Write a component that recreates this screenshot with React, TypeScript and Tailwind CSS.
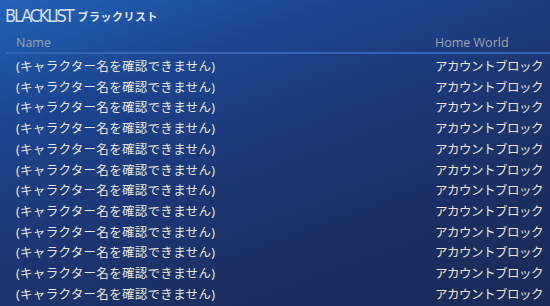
import React from "react";

const rows = Array.from({ length: 12 }, () => ({
  name: "(キャラクター名を確認できません)",
  world: "アカウントブロック",
}));

const jp = { fontFamily: '"Noto Sans", "Noto Sans CJK JP", sans-serif' };

export default function App() {
  return (
    <div
      className="w-[550px] h-[306px] overflow-hidden bg-[linear-gradient(160deg,#2163b8_0%,#1c4590_25%,#1c3775_50%,#1c2e62_75%,#1b2a58_100%)] text-[#e9e5dc]"
      style={jp}
    >
      {/* title bar */}
      <div className="flex items-end gap-[5px] pl-[5px] pt-[6px] h-[25px]">
        <span
          className="text-[18px] leading-[18px] text-[#d8dde6] whitespace-nowrap tracking-[-2.2px] [font-stretch:condensed]"
          style={{ fontFamily: '"DejaVu Sans Condensed", "Liberation Sans Narrow", "DejaVu Sans", sans-serif' }}
        >
          BLACKLIST
        </span>
        <span className="text-[11px] leading-[16px] font-semibold text-[#dfe3ea] tracking-[0.5px]">ブラックリスト</span>
      </div>

      {/* column headers */}
      <div className="flex items-center h-[27px] pt-[10px] pl-[16px] text-[12.5px] text-[#9ba3b0]" style={{ fontFamily: '"Open Sans", sans-serif' }}>
        <span className="flex-1">Name</span>
        <span className="w-[115px]">Home World</span>
      </div>
      <div className="ml-[6px] h-[2px] bg-[#3563b3]" />

      {/* rows */}
      <div className="flex flex-col pt-[3px]">
        {rows.map((r, i) => (
          <div key={i} className="flex items-center h-[20.7px] pl-[16px] text-[12.5px] leading-none">
            <span className="flex-1 tracking-[0.3px]">{r.name}</span>
            <span className="w-[115px] tracking-[-0.5px]">{r.world}</span>
          </div>
        ))}
      </div>
    </div>
  );
}
